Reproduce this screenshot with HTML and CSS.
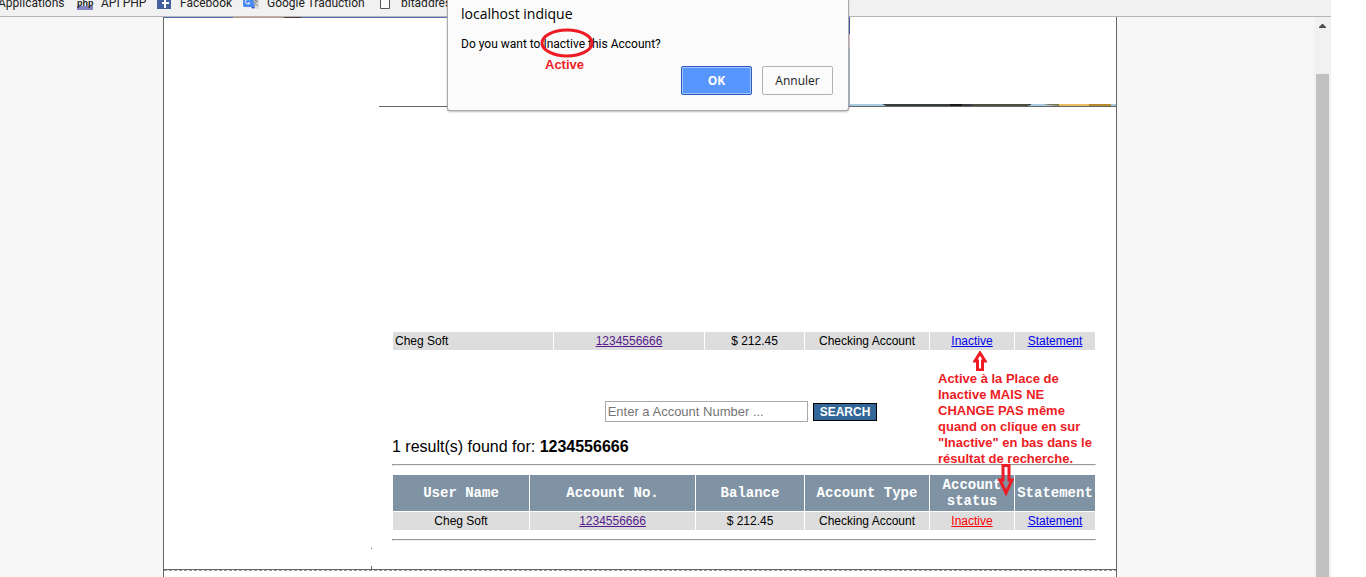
FILE: index.html
```html
<!DOCTYPE html>
<html lang="fr">
<head>
<meta charset="utf-8">
<title>Account search</title>
<link rel="stylesheet" href="styles.css">
</head>
<body>
<div class="browser">
  <nav class="bookmarks">
    <a href="#" class="bookmark first">Applications</a>
    <a href="#" class="bookmark api"><span class="php">php</span>API PHP</a>
    <a href="#" class="bookmark fb">
      <svg class="icon" width="14" height="14" viewBox="0 0 14 14"><rect width="14" height="14" fill="#4460a0"/><path d="M7 13V9H5V7h2V3h4v2H9v2h3v2H9v4z" fill="#fff"/></svg>Facebook</a>
    <a href="#" class="bookmark gt">
      <svg class="icon" width="16" height="14" viewBox="0 0 16 14"><path d="M6 3h10v11h-5z" fill="#dcdcdc"/><path d="M0 0h9l3 12H1L0 11z" fill="#4a8af4"/><path d="M8 12h4l-2 2z" fill="#2a56c6"/><path d="M7 5a2.500 2.500 0 1 0 0 3H5" fill="none" stroke="#fff"/><path d="M10 6h5M12.500 5v1M14 6l-3 5M11 7l4 4" fill="none" stroke="#7b8a92"/></svg>Google Traduction</a>
    <a href="#" class="bookmark bit">
      <svg class="icon" width="10" height="14" viewBox="0 0 10 14"><path d="M.5.5h9v13h-9z" fill="#fafafa" stroke="#555"/></svg>bitaddress</a>
  </nav>
  <div class="viewport">
    <main class="desk">
      <div class="page">
        <div class="banner">
          <svg class="banner-top" height="1" viewBox="0 0 284 1" preserveAspectRatio="none" shape-rendering="crispEdges"><path d="M0 0h284v1H0z" fill="#5472b5"/><path d="M69 0h68v1H69z" fill="#c39b82"/><path d="M120 0h17v1h-17z" fill="#4c3b35"/></svg>
          <div class="banner-rule">
            <svg class="banner-photo" viewBox="0 0 403 89" preserveAspectRatio="none" shape-rendering="crispEdges"><path d="M0 0h403v89H0z" fill="#4565a9"/><path d="M0 25h2v30H0z" fill="#666589"/><path d="M0 55h2v34H0z" fill="#70462f"/><path d="M400 17h3v14h-3z" fill="#eac4cd"/><path d="M400 31h3v58h-3z" fill="#9fbfd5"/></svg>
            <svg class="banner-foot" height="2" viewBox="0 0 266 2" preserveAspectRatio="none"><path d="M0 0h266v2H0z" fill="#a8cce2"/><path d="M32 0h149v1l-5 1H36z" fill="#373d3f"/><path d="M100 0h12v2h-12z" fill="#171a1b"/><path d="M122 0h56v2h-56z" fill="#4c4e3f"/><path d="M193 0h16v2l-10-1z" fill="#7d7657"/><path d="M209 0h30v2h-30z" fill="#e9bd61"/><path d="M239 0h22v2h-22z" fill="#b68b2c"/></svg>
          </div>
        </div>
        <div class="content">
          <table class="grid accounts">
            <colgroup><col class="c160"><col class="c150"><col class="c99"><col class="c124"><col class="c84"><col class="c80"></colgroup>
            <tbody><tr><td class="name">Cheg Soft</td><td><a href="#" class="visited">1234556666</a></td><td>$ 212.45</td><td>Checking Account</td><td><a href="#">Inactive</a></td><td><a href="#">Statement</a></td></tr></tbody>
          </table>
          <form class="search">
            <input type="text" class="field" aria-label="Account number" placeholder="Enter a Account Number ...">
            <button type="button" class="go">SEARCH</button>
          </form>
          <p class="found">1 result(s) found for: <b>1234556666</b></p>
          <hr class="rule">
          <table class="grid results">
            <colgroup><col class="c136"><col class="c165"><col class="c108"><col class="c124"><col class="c84"><col class="c80"></colgroup>
            <thead><tr><th>User Name</th><th>Account No.</th><th>Balance</th><th>Account Type</th><th>Account status</th><th>Statement</th></tr></thead>
            <tbody><tr><td>Cheg Soft</td><td><a href="#" class="visited">1234556666</a></td><td>$ 212.45</td><td>Checking Account</td><td><a href="#" class="alert">Inactive</a></td><td><a href="#">Statement</a></td></tr></tbody>
          </table>
          <hr class="rule">
          <div class="note">
            <svg class="arrow-up" width="14" height="20" viewBox="0 0 14 20"><path d="M7 2l5 8H9.500v9h-5v-9H2z" fill="#fff" stroke="#ed1c24" stroke-width="3"/></svg>
            <p class="note-text">Active à la Place de<br>Inactive MAIS NE<br>CHANGE PAS même<br>quand on clique en sur<br>"Inactive" en bas dans le<br>résultat de recherche.</p>
            <svg class="arrow-down" width="16" height="32" viewBox="0 0 16 32"><path d="M5 1.500h6V16h3L8 29 2 16h3z" fill="none" stroke="#ed1c24" stroke-width="3"/></svg>
          </div>
        </div>
        <div class="page-end"><span class="tick"></span></div>
        <div class="dashes"></div>
      </div>
    </main>
    <div class="scrollbar">
      <svg class="scroll-up" width="7" height="4" viewBox="0 0 7 4"><path d="M3 0h1l3 3v1H0V3z" fill="#505050"/></svg>
      <div class="thumb"></div>
    </div>
  </div>
  <div class="dialog" role="dialog" aria-labelledby="dlg-title">
    <h1 class="dialog-title" id="dlg-title">localhost indique</h1>
    <p class="dialog-text">Do you want to Inactive this Account?</p>
    <div class="actions"><button type="button" class="btn ok">OK</button><button type="button" class="btn">Annuler</button></div>
    <svg class="circle" width="54" height="30" viewBox="0 0 54 30"><ellipse cx="27" cy="15" rx="25" ry="13" fill="none" stroke="#ed1c24" stroke-width="3"/></svg>
    <span class="dialog-note">Active</span>
  </div>
</div>
</body>
</html>
```

FILE: styles.css
```css
* { box-sizing: border-box; }
body { margin: 0; background: #fff; color: #000; font: 12px "Liberation Sans", Arial, sans-serif; overflow: hidden; }
svg { display: block; }
.browser { position: relative; display: flex; flex-direction: column; height: 100vh; margin-right: 35px; }

.bookmarks { display: flex; flex: none; align-items: flex-end; height: 17px; overflow: hidden; background: #f1f1f1; border-bottom: 1px solid #b5b5b5; font-family: Roboto, "Noto Sans", sans-serif; }
.bookmark { display: flex; flex: none; align-items: flex-end; height: 26px; color: #222; line-height: 26px; text-decoration: none; white-space: nowrap; }
.bookmark .icon { margin-bottom: 7px; }
.first { margin-left: -2px; width: 79px; }
.api { width: 80px; gap: 8px; }
.fb { width: 86px; gap: 9px; }
.gt { width: 137px; gap: 8px; }
.bit { gap: 11px; }
.php { width: 16px; height: 14px; margin-bottom: 6px; background: linear-gradient(#f1f1f1 10px, #8384bd 10px); font: bold 9px/14px "Liberation Sans", sans-serif; text-align: center; }

.viewport { display: flex; flex: 1; min-height: 0; }
.desk { flex: 1; overflow: hidden; padding-right: 34px; background: #f7f7f7; }
.page { max-width: 954px; min-height: 100%; margin: 0 auto; background: #fff; border: solid #666; border-width: 0 1px; }
.banner { display: flex; height: 90px; }
.banner-top { flex: none; width: 284px; margin-right: -69px; }
.banner-rule { display: flex; flex: 1; align-items: flex-end; border-bottom: 1px solid #666; padding-left: 68px; }
.banner-photo { flex: none; width: 403px; height: 89px; }
.banner-foot { flex: 1; min-width: 0; }

.content { position: relative; margin: 0 20px 0 228px; padding-top: 224px; }
.grid { width: 100%; table-layout: fixed; border-spacing: 1px; font-size: 12px; line-height: 14px; text-align: center; }
.grid td { padding: 2px; background: #ddd; }
.grid .name { text-align: left; }
.grid th { padding: 2px 0; background: #8093a4; color: #fff; font: bold 14px/16px "Liberation Mono", "Courier New", monospace; }
.grid a { color: #00e; }
.grid .visited { color: #551a8b; }
.grid .alert { color: #f00; }
.c160 { width: 160px; }
.c150 { width: 150px; }
.c99 { width: 99px; }
.c124 { width: 124px; }
.c84 { width: 84px; }
.c80 { width: 80px; }
.c136 { width: 136px; }
.c165 { width: 165px; }
.c108 { width: 108px; }
.search { display: flex; justify-content: center; align-items: center; gap: 5px; margin-top: 50px; padding-right: 6px; }
.field { width: 203px; height: 21px; padding: 1px 2px; border: 1px solid #a9a9a9; font: 13px "Liberation Sans", Arial, sans-serif; }
.field::placeholder { color: #757575; opacity: 1; }
.go { height: 18px; padding: 0 6px; border: 1px solid #000; background: #369; color: #fff; font: bold 12px/16px "Liberation Sans", Arial, sans-serif; }
.found { margin: 16px 0 8px; font-size: 16px; line-height: 18px; }
.rule { height: 2px; margin: 8px 0 7px; border: solid; border-width: 1px; border-color: #9a9a9a #eee #eee #9a9a9a; }
.rule + .grid { margin-top: 8px; }

.note { position: absolute; top: 244px; left: 546px; color: #ed1c24; }
.arrow-up { margin-left: 35px; }
.note-text { margin: 0; font-weight: bold; font-size: 13px; line-height: 16px; white-space: nowrap; }
.arrow-down { position: absolute; top: 113px; left: 60px; }
.page-end { height: 22px; border-bottom: 1px solid #666; padding-left: 207px; }
.tick { display: block; width: 1px; height: 21px; background: linear-gradient(#666 1px, transparent 1px 18px, #666 18px); }
.dashes { height: 1px; background: repeating-linear-gradient(90deg, #999 0 3px, #fff 3px 5px); }

.scrollbar { flex: none; display: flex; flex-direction: column; align-items: center; width: 17px; background: #f1f1f1; }
.scroll-up { flex: none; margin: 7px 0 46px; }
.thumb { flex: 1; width: 13px; background: #c1c1c1; }

.dialog { position: absolute; top: 0; left: 447px; width: 402px; height: 111px; padding: 5px 15px 0 13px; background: #fbfbfb; border: 1px solid #aaa; border-top: 0; border-radius: 0 0 3px 3px; box-shadow: 0 1px 2px #0004; font-family: "Open Sans", "Noto Sans", sans-serif; }
.dialog-title { margin: 0; font-size: 14px; font-weight: normal; line-height: 18px; }
.dialog-text { margin: 12px 0 13px; font-family: Roboto, "Noto Sans", sans-serif; font-size: 12px; line-height: 18px; }
.actions { display: flex; justify-content: flex-end; gap: 10px; }
.btn { width: 71px; height: 29px; padding: 0; border: 1px solid #b2b2b2; border-radius: 2px; background: #fbfbfb; color: #222; font: 12px "Open Sans", "Noto Sans", sans-serif; }
.ok { border-color: #2a5bc0; background: #5796ff; color: #fff; font-weight: bold; box-shadow: inset 0 0 0 1px #a3c4ff; }
.circle { position: absolute; top: 28px; left: 92px; }
.dialog-note { position: absolute; top: 57px; left: 97px; color: #ed1c24; font: bold 13px/16px "Liberation Sans", Arial, sans-serif; }
```
